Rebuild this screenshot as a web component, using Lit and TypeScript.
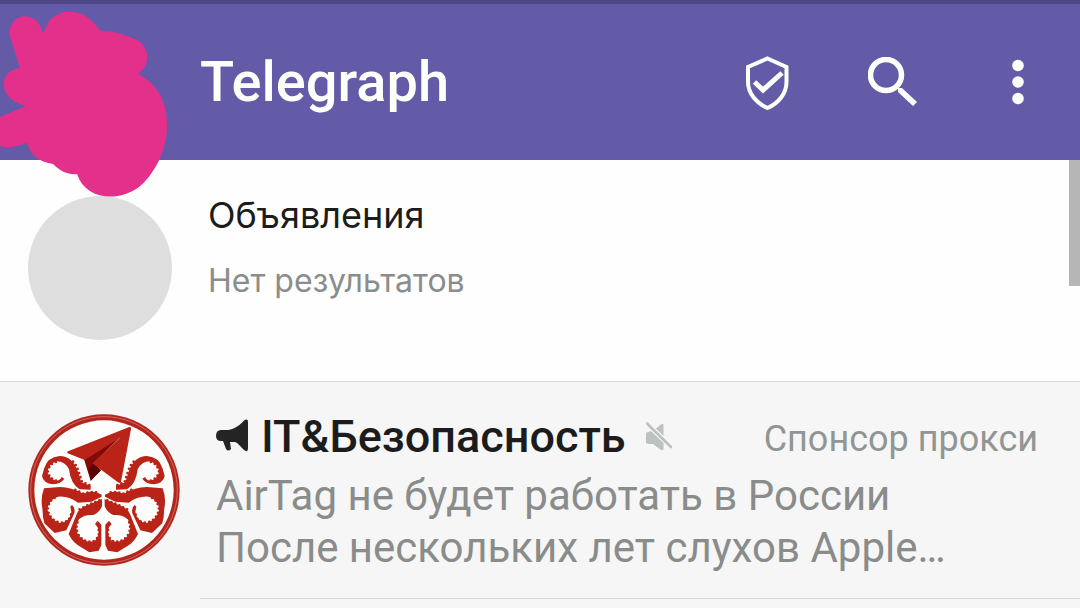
import { LitElement, html, css, svg } from "lit";
import { customElement } from "lit/decorators.js";

@customElement("hydra-logo")
class HydraLogo extends LitElement {
  static styles = css`
    :host { display: block; }
    svg { display: block; width: 100%; height: 100%; }
  `;

  half() {
    return svg`
      <g fill="#b92318">
        <path d="M242 257 L214 247 L204 215 Q188 169 149 168 Q112 171 102 206 L96 228 Q100 250 129 253 Q153 251 163 236 L155 231 Q150 242 138 242 Q118 236 112 215 Q118 190 140 184 Q165 184 177 208 Q182 252 209 268 L242 269 Z"/>
        <path d="M275 284 L258 276 L240 275 L219 281 Q184 261 150 261 L102 265 Q91 295 97 325 Q98 352 103 370 L134 399 L169 391 L193 340 Q196 322 186 315 L181 320 L184 336 Q178 368 150 369 Q118 360 112 328 Q116 298 144 290 Q176 287 204 308 L244 305 L275 290 Z"/>
        <path d="M276 297 L234 315 Q208 323 200 342 L176 402 Q186 424 204 436 L238 457 L266 452 L274 435 L274 374 L263 362 L255 372 L263 382 Q271 407 253 424 Q222 431 203 402 Q194 376 207 358 Q222 343 250 345 Q270 336 276 318 Z"/>
      </g>
      <g fill="none" stroke="#b92318" stroke-width="8" stroke-linecap="round" stroke-dasharray="0 13">
        <path d="M238 255 L216 246 L206 215 Q200 195 188 184"/>
        <path d="M138 242 Q118 236 113 215 Q118 191 140 185"/>
        <path d="M183 344 Q178 368 150 368 Q119 360 113 328 Q117 299 138 292"/>
        <path d="M258 277 L240 276 L219 281 Q200 270 184 266"/>
        <path d="M266 390 Q271 407 253 423 Q222 431 204 402 Q196 380 203 366"/>
        <path d="M268 301 L234 315 L208 328"/>
      </g>`;
  }

  render() {
    return html`<svg viewBox="54 42 456 456" role="img" aria-label="IT&Безопасность">
      <circle cx="282" cy="270" r="227" fill="#b3261d"/>
      <circle cx="282" cy="270" r="220" fill="none" stroke="#cd6a62" stroke-width="3"/>
      <circle cx="282" cy="270" r="209" fill="#fdfefb"/>
      ${this.half()}
      <g transform="matrix(-1 0 0 1 560 0)">${this.half()}</g>
      <path d="M222 178 L330 112 L252 188 L273 211 L242 242 Z" fill="#820b09"/>
      <path d="M236 208 L250 190 L273 211 L242 242 Z" fill="#5c0506"/>
      <path d="M358 81 Q364 80 363 87 L333 245 Q330 251 324 247 L247 190 L332 112 L224 180 L173 160 Q169 156 176 153 Z" fill="#b92318"/>
    </svg>`;
  }
}

@customElement("app-root")
class AppRoot extends LitElement {
  static styles = css`
    :host {
      display: block;
      position: relative;
      min-height: 100vh;
      background: #f5f6f5;
      font-family: Roboto, "Noto Sans", sans-serif;
      color: #1c1c1c;
    }
    h1, h2, p, ul { margin: 0; padding: 0; font-weight: inherit; }
    ul { list-style: none; }
    .bar {
      display: flex;
      align-items: center;
      height: 156px;
      padding-left: 200px;
      border-top: 4px solid #4f4787;
      background: #645ba8;
      color: #fdfffb;
    }
    .bar h1 { flex: 1; font-size: 56px; line-height: 64px; font-weight: 500; }
    .action {
      display: grid;
      place-items: center;
      width: 125px;
      height: 96px;
      padding: 0;
      border: 0;
      background: none;
      color: inherit;
    }
    .scribble {
      position: absolute;
      top: 0;
      left: 0;
      width: 180px;
      height: 210px;
      pointer-events: none;
    }
    .scroll {
      position: absolute;
      top: 160px;
      right: 0;
      width: 11px;
      height: 126px;
      background: #b6b6b6;
    }
    .notice {
      display: flex;
      gap: 36px;
      padding: 36px 28px 41px;
      border-bottom: 1px solid #d9dad9;
      background: #fefefe;
    }
    .blank { flex: none; width: 144px; height: 144px; border-radius: 50%; background: #dedede; }
    .notice-text { font-family: Inter, "Noto Sans", sans-serif; }
    .notice h2 { font-size: 36px; line-height: 38px; }
    .notice p { margin-top: 28px; font-size: 32px; line-height: 38px; color: #8a8d8b; }
    .chat {
      display: flex;
      align-items: flex-start;
      gap: 36px;
      padding: 29px 42px 24px 28px;
    }
    .logo { flex: none; width: 152px; height: 152px; margin-top: 3px; }
    .body { flex: 1; min-width: 0; }
    .head { display: flex; align-items: center; height: 52px; margin-bottom: 7px; }
    .head h2 { margin: 0 20px 0 12px; font-size: 45px; line-height: 52px; font-weight: 500; }
    .tag { margin-left: auto; padding-top: 4px; font-size: 36px; line-height: 48px; color: #919694; }
    .msg { font-size: 42px; line-height: 52px; color: #898c8a; }
    .line { display: block; white-space: nowrap; overflow: hidden; text-overflow: ellipsis; }
    .rule { height: 1px; margin-left: 200px; background: #d5d7d5; }
  `;

  render() {
    return html`
      <header class="bar">
        <h1>Telegraph</h1>
        <button class="action" aria-label="Прокси">
          <svg width="46" height="56" viewBox="0 0 46 56" fill="none" stroke="currentColor" stroke-width="4">
            <path d="M22.500 4.500 L41.500 13 V28 C41.500 39 34 49 22.500 54 C11 49 3 39 3 28 V13 Z"/>
            <path d="M9.500 28 L18 36 L37 19" stroke-width="5"/>
          </svg>
        </button>
        <button class="action" aria-label="Поиск">
          <svg width="50" height="50" viewBox="0 0 50 50" fill="none" stroke="currentColor">
            <circle cx="18" cy="18" r="15.500" stroke-width="5.500"/>
            <path d="M30 31 L34 31 L49 45 L45 49 L30 35 Z" fill="currentColor" stroke="none"/>
          </svg>
        </button>
        <button class="action" aria-label="Меню">
          <svg width="12" height="46" viewBox="0 0 12 46" fill="currentColor">
            <circle cx="6" cy="6.500" r="5.800"/><circle cx="6" cy="23" r="5.800"/><circle cx="6" cy="39.500" r="5.800"/>
          </svg>
        </button>
      </header>

      <section class="notice">
        <div class="blank"></div>
        <div class="notice-text">
          <h2>Объявления</h2>
          <p>Нет результатов</p>
        </div>
      </section>

      <ul>
        <li class="chat">
          <hydra-logo class="logo"></hydra-logo>
          <div class="body">
            <div class="head">
              <svg width="33" height="36" viewBox="0 0 33 36" fill="#242424">
                <path d="M5 11 H12 C19 10 24 6 28 1.500 Q32 -1 32 3 V29 Q32 34 28 31 C24 27 22 24 19 23 L14 23 L15 30 Q12 33 10 30 L7 22 H5 Q0 22 0 17 Q0 11 5 11 Z"/>
              </svg>
              <h2>IT&amp;Безопасность</h2>
              <svg width="26" height="30" viewBox="0 0 26 30" fill="#bcc2bf">
                <path d="M10 6.500 L15.500 2 Q17.500 1 17.500 3 V14 Z"/>
                <path d="M0 12 Q0 10 2 10 L5 9 L17.500 21 V27 Q17 29 15 28 L7 22 H2 Q0 22 0 20 Z"/>
                <path d="M1 1.500 L25 25" fill="none" stroke="#bcc2bf" stroke-width="2.600" stroke-linecap="round"/>
              </svg>
              <span class="tag">Спонсор прокси</span>
            </div>
            <p class="msg">
              <span class="line">AirTag не будет работать в России</span>
              <span class="line">После нескольких лет слухов Apple…</span>
            </p>
          </div>
        </li>
      </ul>
      <div class="rule"></div>

      <div class="scroll"></div>
      <svg class="scribble" viewBox="0 0 180 210" fill="#e2308b" aria-hidden="true">
        <path d="M10 36 C7 12 38 9 42 32 L44 32 C50 8 78 6 93 22 L101 31 C116 31 128 36 137 40 C150 48 151 65 138 74 C156 83 167 100 167 124 C168 150 153 176 139 187 C117 203 85 199 77 174 C69 175 61 172 53 164 C40 162 31 156 27 143 C17 146 8 149 0 146 V117 L26 106 C11 102 3 94 4 82 C5 73 12 69 20 68 Z"/>
      </svg>
    `;
  }
}
